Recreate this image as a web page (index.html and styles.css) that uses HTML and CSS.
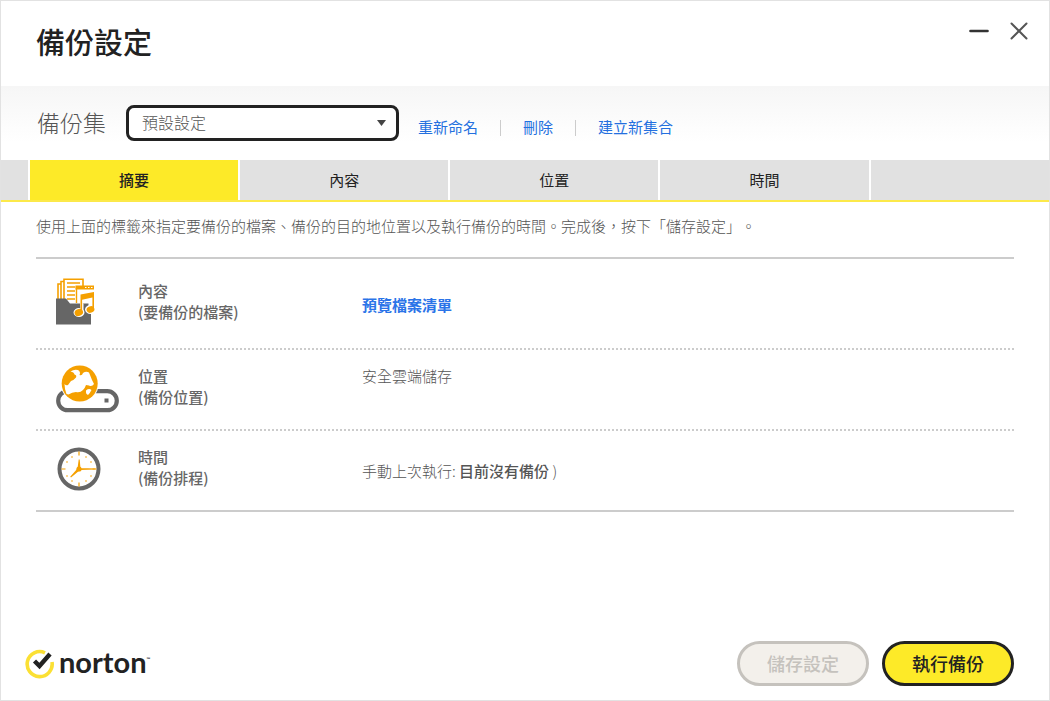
FILE: index.html
```html
<!DOCTYPE html>
<html lang="zh-Hant">
<head>
<meta charset="utf-8">
<meta name="viewport" content="width=device-width, initial-scale=1">
<title>備份設定</title>
<link rel="stylesheet" href="styles.css">
</head>
<body>
<div class="window">
  <header class="titlebar">
    <h1 class="title">備份設定</h1>
    <div class="window-controls">
      <button class="icon-button" type="button" aria-label="最小化">
        <svg width="20" height="20" viewBox="0 0 20 20"><path d="M1.500 10h17" stroke="#333" stroke-width="2.600" stroke-linecap="round"/></svg>
      </button>
      <button class="icon-button" type="button" aria-label="關閉">
        <svg width="20" height="20" viewBox="0 0 20 20"><path d="M2.500 2.500l15 15M17.500 2.500l-15 15" stroke="#555" stroke-width="2" stroke-linecap="round"/></svg>
      </button>
    </div>
  </header>

  <div class="toolbar">
    <label class="set-label" for="backup-set">備份集</label>
    <span class="select-wrap">
      <select class="set-select" id="backup-set"><option>預設設定</option></select>
      <svg class="select-arrow" width="9" height="6" viewBox="0 0 9 6"><path d="M0 0h9L4.500 6z" fill="#444"/></svg>
    </span>
    <nav class="set-links">
      <a class="link" href="#">重新命名</a>
      <span class="divider"></span>
      <a class="link" href="#">刪除</a>
      <span class="divider"></span>
      <a class="link" href="#">建立新集合</a>
    </nav>
  </div>

  <div class="tabs">
    <span class="tab-filler"></span>
    <button class="tab tab-active" type="button">摘要</button>
    <button class="tab" type="button">內容</button>
    <button class="tab" type="button">位置</button>
    <button class="tab" type="button">時間</button>
    <span class="tab-filler"></span>
  </div>

  <main class="content">
    <p class="intro">使用上面的標籤來指定要備份的檔案、備份的目的地位置以及執行備份的時間。完成後，按下「儲存設定」。</p>
    <div class="summary">
      <section class="row row-tall">
        <svg class="row-icon" width="64" height="48" viewBox="0 0 64 48">
          <g fill="#fff" stroke="#f5a000" stroke-width="1.600">
            <path d="M2 22V6h20"/>
            <path d="M5 24V3.500h20"/>
            <path d="M8 27V1.200h19V27z"/>
          </g>
          <path d="M11 5h13M11 9h8M11 13h8M11 17h8M11 21h8" stroke="#f5a000" stroke-width="1.500"/>
          <path d="M0 20.500h10l4 5h21V46.500H0z" fill="#666"/>
          <path d="M20 8h18v17h-18z" fill="#fff"/>
          <path d="M20.500 25V9h17" fill="none" stroke="#f5a000" stroke-width="1.400"/>
          <path d="M19.500 7.500h18.500v4h-18.500z" fill="#f5a000"/>
          <path d="M29 9.500h1.500M32 9.500h1.500M35 9.500h1.500" stroke="#fff" stroke-width="1.200"/>
          <g stroke="#fff" stroke-width="3" stroke-linejoin="round" fill="#fff">
            <path d="M25 17l12-2v16h-3V22l-8 2v10z"/>
            <ellipse cx="23" cy="34.500" rx="4" ry="3"/>
            <ellipse cx="34.500" cy="31.500" rx="4" ry="3"/>
          </g>
          <path d="M24.500 34V16.500L38 14v17.500h-1.600V19.500l-10.300 2.200V34z" fill="#f5a000"/>
          <ellipse cx="22.800" cy="34.500" rx="4.300" ry="3.400" transform="rotate(-20 22.800 34.500)" fill="#f5a000"/>
          <ellipse cx="34.500" cy="31.500" rx="4" ry="3.200" transform="rotate(-20 34.500 31.500)" fill="#f5a000"/>
        </svg>
        <h2 class="row-label">內容<br>(要備份的檔案)</h2>
        <p class="row-value row-value-middle"><a class="link link-strong" href="#">預覽檔案清單</a></p>
      </section>
      <section class="row">
        <svg class="row-icon" width="64" height="48" viewBox="0 0 64 48">
          <rect x="2.200" y="26.200" width="58.600" height="19" rx="9.500" fill="#fff" stroke="#666" stroke-width="4.200"/>
          <rect x="48.500" y="33.500" width="4" height="4" fill="#666"/>
          <circle cx="23.700" cy="18.500" r="19" fill="#fff"/>
          <circle cx="23.700" cy="18.500" r="18" fill="#f5a000"/>
          <path d="M14.500 6.500Q18 4 22 5Q25 7 23.500 10Q26 11 27 8Q30 6 33 7.500L36 15L38 19Q36 22 33 20.500L30 20Q29 23 27 25Q24 28 20 27Q16 27 12.500 29.500L10.500 29L9 24L8.500 19Q10 21 12 20L15 16Q18 15 20 12.500Q21 10 18.500 9.500Q18 7 14.500 6.500z" fill="#fff"/>
          <path d="M30 25.500Q33 23 35.500 25Q34 28 32 30Q29.500 29 30 25.500z" fill="#fff"/>
        </svg>
        <h2 class="row-label">位置<br>(備份位置)</h2>
        <p class="row-value">安全雲端儲存</p>
      </section>
      <section class="row">
        <svg class="row-icon" width="64" height="48" viewBox="0 0 64 48">
          <circle cx="23" cy="23" r="19.500" fill="#fff" stroke="#666" stroke-width="4"/>
          <path d="M23 5.500v4M23 36.500v4M5.500 23h4M36.500 23h4" stroke="#f5a000" stroke-width="1.200"/>
          <g fill="#f5a000">
            <circle cx="30" cy="11" r=".8"/><circle cx="35" cy="16" r=".8"/>
            <circle cx="35" cy="30" r=".8"/><circle cx="30" cy="35" r=".8"/>
            <circle cx="16" cy="35" r=".8"/><circle cx="11" cy="30" r=".8"/>
            <circle cx="11" cy="16" r=".8"/><circle cx="16" cy="11" r=".8"/>
            <circle cx="23" cy="23" r="2.600"/>
            <path d="M22.700 13.500h1l.8 9h-3zM24 22l15.500.6v.8L24 24zM21.500 22.500l2 2-8.500 7-.8-.8z"/>
          </g>
        </svg>
        <h2 class="row-label">時間<br>(備份排程)</h2>
        <p class="row-value row-value-middle">手動上次執行: <strong>目前沒有備份</strong> )</p>
      </section>
    </div>
  </main>

  <footer class="footer">
    <div class="brand">
      <svg width="30" height="30" viewBox="0 0 30 30">
        <path d="M20 3.800A12.500 12.500 0 1 0 27 13" fill="none" stroke="#fbe034" stroke-width="3.600"/>
        <path d="M9.500 12l5 5L25 5" fill="none" stroke="#222" stroke-width="4.400"/>
      </svg>
      <span class="brand-name">norton<span class="brand-mark">™</span></span>
    </div>
    <div class="actions">
      <button class="button" type="button" disabled>儲存設定</button>
      <button class="button button-primary" type="button">執行備份</button>
    </div>
  </footer>
</div>
</body>
</html>
```
FILE: styles.css
```css
* {
  box-sizing: border-box;
}

body {
  margin: 0;
  background: #fff;
  color: #555;
  font: 300 15px/21px "Noto Sans CJK TC", sans-serif;
  text-spacing-trim: space-all;
}

h1, h2, p {
  margin: 0;
}

button, select {
  font: inherit;
  color: inherit;
}

.window {
  display: flex;
  flex-direction: column;
  min-height: 100vh;
  border: 1px solid #e2e2e2;
}

.titlebar {
  display: flex;
  justify-content: space-between;
  padding: 18px 20px 23px 35px;
}

.title {
  color: #222;
  font-size: 29px;
  line-height: 44px;
  font-weight: 500;
}

.window-controls {
  display: flex;
  align-items: flex-start;
  gap: 20px;
  padding-top: 2px;
}

.icon-button {
  padding: 0;
  border: 0;
  background: none;
  line-height: 0;
}

.toolbar {
  display: flex;
  align-items: center;
  padding: 18px 36px;
  background: linear-gradient(#f6f6f6, #fff 56px);
}

.set-label {
  padding-bottom: 2px;
  font-size: 23px;
  line-height: 36px;
}

.select-wrap {
  position: relative;
  margin-left: 20px;
}

.set-select {
  display: block;
  width: 273px;
  height: 36px;
  padding: 0 13px 2px;
  border: 3px solid #222;
  border-radius: 8px;
  background: #fff;
  font-size: 16px;
  appearance: none;
}

.select-arrow {
  position: absolute;
  top: 15px;
  right: 13px;
  pointer-events: none;
}

.set-links {
  display: flex;
  align-items: center;
  gap: 22px;
  margin-left: 19px;
  padding-top: 6px;
}

.link {
  color: #2470df;
  font-weight: 400;
  text-decoration: none;
}

.link-strong {
  color: #2b74e8;
  font-weight: 700;
}

.divider {
  width: 1px;
  height: 16px;
  margin-top: 4px;
  background: #ccc;
}

.tabs {
  display: grid;
  grid-template-columns: 27px repeat(4, 7fr) 6fr;
  column-gap: 2px;
  border-bottom: 2px solid #fce94a;
}

.tab, .tab-filler {
  height: 40px;
  border: 0;
  background: #e1e1e1;
}

.tab {
  padding: 0 0 2px;
  color: #222;
  font-weight: 400;
}

.tab-active {
  background: #fdea28;
  font-weight: 500;
}

.content {
  flex: 1;
  padding: 13px 35px;
}

.intro {
  padding-bottom: 21px;
}

.summary {
  border-top: 2px solid #ccc;
  border-bottom: 2px solid #ccc;
}

.row {
  display: grid;
  grid-template-columns: 64px 208px 1fr;
  column-gap: 16px;
  padding: 15px 0 16px 20px;
}

.row + .row {
  border-top: 2px dotted #ccc;
}

.row-tall {
  padding-top: 19px;
  padding-bottom: 22px;
}

.row-tall .row-label, .row-tall .row-value {
  margin-top: 2px;
}

.row-label {
  padding: 0 2px;
  color: #666;
  font-size: 15px;
  font-weight: 500;
}

.row-label, .row-value {
  line-height: 21px;
}

.row-value {
  padding-left: 2px;
}

.row-value strong {
  font-weight: 500;
}

.row-value-middle {
  padding-top: 14px;
}

.footer {
  display: flex;
  align-items: center;
  justify-content: space-between;
  padding: 14px 35px 14px 24px;
}

.brand {
  display: flex;
  align-items: center;
  gap: 4px;
}

.brand-name {
  padding-bottom: 6px;
  color: #222;
  font: 700 29px/32px Lato, sans-serif;
}

.brand-mark {
  font-size: 5px;
  vertical-align: 12px;
}

.actions {
  display: flex;
  gap: 13px;
}

.button {
  width: 132px;
  height: 45px;
  padding: 0;
  border: 3px solid #c5c2bd;
  border-radius: 24px;
  background: #f3f0eb;
  color: #c5c2bd;
  font-size: 18px;
  font-weight: 500;
}

.button-primary {
  border-color: #222;
  background: #fdea28;
  color: #222;
}
```
